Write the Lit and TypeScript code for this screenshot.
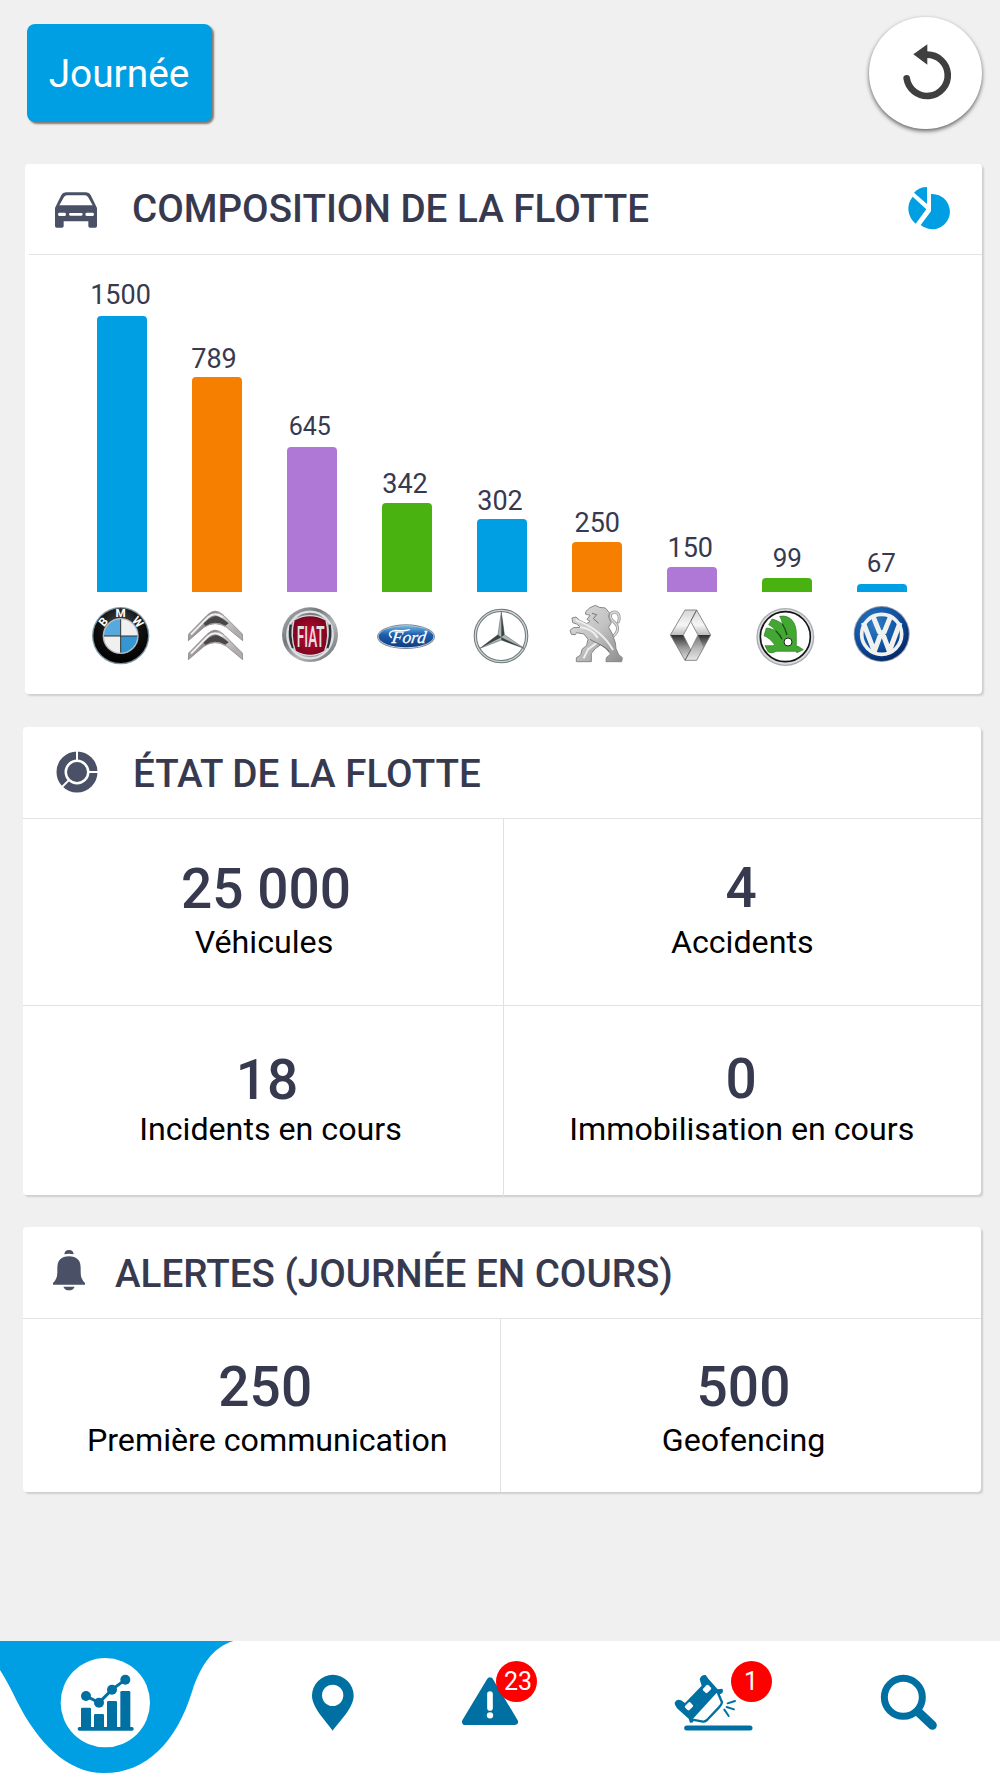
import { html, css, svg, LitElement, TemplateResult } from 'lit';

import { customElement, property } from 'lit/decorators.js';
import { styleMap } from 'lit/directives/style-map.js';


interface Brand {
  name: string;
  count: number;
  height: number;
  color: string;
  gap: number;
  shift: number;
  size?: number;
  logo: TemplateResult;
}

interface Stat {
  value: string;
  label: string;
  className: string;
}

const BLUE = '#009fe3';
const ORANGE = '#f77f00';
const PURPLE = '#af78d6';
const GREEN = '#49b211';

const bmw = html`<svg viewBox="30 39 192 192">
  <defs>
    <radialGradient id="bmw-ring" cx="0.5" cy="0.3" r="0.7">
      <stop offset="0" stop-color="#4a4d50"></stop>
      <stop offset="0.55" stop-color="#111"></stop>
      <stop offset="1" stop-color="#000"></stop>
    </radialGradient>
  </defs>
  <circle cx="122" cy="137" r="86" fill="#7d96a3"></circle>
  <circle cx="122" cy="137" r="82" fill="url(#bmw-ring)"></circle>
  <circle cx="122" cy="138" r="54" fill="#b4b8bb"></circle>
  <circle cx="122" cy="138" r="50" fill="#f0f0f0"></circle>
  <path d="M122 138V88A50 50 0 0 0 72 138Z" fill="#56a9dc"></path>
  <path d="M122 138V188A50 50 0 0 0 172 138Z" fill="#3496d2"></path>
  <path d="M122 88V188M72 138H172" stroke="#333" stroke-width="3"></path>
  <g fill="#fff" font-family="Roboto, sans-serif" font-weight="700" font-size="35" text-anchor="middle">
    <text transform="translate(79 103) rotate(-50)">B</text>
    <text x="122" y="82">M</text>
    <text transform="translate(164 104) rotate(50)">W</text>
  </g>
</svg>`;

const chevron = svg`
  <path d="M325 152L326 132L380 77Q405 50 432 77L487 132L488 152L440 112Q405 90 372 112Z" fill="url(#citroen-metal)" stroke="#8d8888" stroke-width="2.5"></path>
  <path d="M370 100Q392 80 408 78Q424 80 446 100L436 107Q405 90 376 107Z" fill="#4a4748"></path>
  <path d="M333 134L384 82Q405 64 428 82" fill="none" stroke="#f3f0f0" stroke-width="6"></path>`;

const citroen = html`<svg viewBox="315 39 192 192">
  <defs>
    <linearGradient id="citroen-metal" x1="0" y1="0" x2="1" y2="0.3">
      <stop offset="0" stop-color="#c6c1c2"></stop>
      <stop offset="0.45" stop-color="#8c8889"></stop>
      <stop offset="0.65" stop-color="#d2cece"></stop>
      <stop offset="1" stop-color="#b0abac"></stop>
    </linearGradient>
  </defs>
  <g>${chevron}</g>
  <g transform="translate(0 57)">${chevron}</g>
</svg>`;

const fiat = html`<svg viewBox="600 39 192 192">
  <defs>
    <linearGradient id="fiat-ring" x1="0" y1="0" x2="1" y2="1">
      <stop offset="0" stop-color="#b4b8bb"></stop>
      <stop offset="0.35" stop-color="#73787c"></stop>
      <stop offset="0.6" stop-color="#b6b9bb"></stop>
      <stop offset="1" stop-color="#5f6569"></stop>
    </linearGradient>
    <radialGradient id="fiat-red">
      <stop offset="0" stop-color="#c4082f"></stop>
      <stop offset="1" stop-color="#7d0520"></stop>
    </radialGradient>
  </defs>
  <ellipse cx="690" cy="134" rx="84" ry="82" fill="url(#fiat-ring)"></ellipse>
  <ellipse cx="690" cy="135" rx="68" ry="70" fill="none" stroke="#dfe2e4" stroke-width="7"></ellipse>
  <path d="M632 104Q626 140 639 174M749 104Q755 140 742 174" fill="none" stroke="#2f3235" stroke-width="7"></path>
  <path d="M642 90Q690 64 738 90Q750 138 734 184Q690 208 646 184Q630 138 642 90Z" fill="url(#fiat-red)" stroke="#d5d8da" stroke-width="4"></path>
  <text transform="translate(650 170) scale(0.475 1)" fill="#dfe1e4" font-family="Roboto, sans-serif" font-weight="500" font-size="86">FIAT</text>
</svg>`;

const ford = html`<svg viewBox="45 39 192 192">
  <defs>
    <linearGradient id="ford-blue" x1="0" y1="0" x2="0" y2="1">
      <stop offset="0" stop-color="#6fb3e2"></stop>
      <stop offset="0.4" stop-color="#1d5fae"></stop>
      <stop offset="1" stop-color="#0f3c80"></stop>
    </linearGradient>
  </defs>
  <ellipse cx="138" cy="140" rx="87" ry="37" fill="#7e8a96"></ellipse>
  <ellipse cx="138" cy="140" rx="84" ry="34" fill="#c3d2e0"></ellipse>
  <ellipse cx="138" cy="140" rx="82" ry="32" fill="url(#ford-blue)"></ellipse>
  <path d="M94 142Q84 134 92 126Q100 120 116 122Q134 124 148 119" fill="none" stroke="#fff" stroke-width="4.5" stroke-linecap="round"></path>
  <text transform="translate(94 159) skewX(-8)" fill="#fff" font-family="'Liberation Serif', serif" font-weight="400" font-style="italic" font-size="52" stroke="#fff" stroke-width="0.8">Ford</text>
</svg>`;

const mercedes = html`<svg viewBox="330 39 192 192">
  <circle cx="423" cy="138" r="77" fill="none" stroke="#6e7879" stroke-width="10"></circle>
  <circle cx="423" cy="138" r="77" fill="none" stroke="#cfd5d6" stroke-width="4"></circle>
  <path d="M424 66L433 134L492 175L424 150L360 175L414 134Z" fill="#aeb6b7" stroke="#6a7374" stroke-width="2"></path>
  <path d="M424 66L433 134L424 142ZM492 175L424 150V142ZM360 175L414 134L424 142Z" fill="#3a4344"></path>
</svg>`;

const peugeot = html`<svg viewBox="615 39 192 192">
  <defs>
    <linearGradient id="peugeot-metal" x1="0" y1="0" x2="1" y2="1">
      <stop offset="0" stop-color="#dedede"></stop>
      <stop offset="0.5" stop-color="#c2c2c2"></stop>
      <stop offset="1" stop-color="#8c8c8c"></stop>
    </linearGradient>
  </defs>
  <path d="M754 142C778 128 777 108 762 96C745 82 750 65 765 66C777 68 781 82 775 96" fill="none" stroke="#999" stroke-width="9" stroke-linecap="round"></path>
  <path d="M754 142C778 128 777 108 762 96C745 82 750 65 765 66C777 68 781 82 775 96" fill="none" stroke="#dcdcdc" stroke-width="4" stroke-linecap="round"></path>
  <path d="M678 64L690 53L706 46L718 52L736 54L748 68L746 82L754 98L746 112L756 130L766 158L768 176L776 194L787 203L785 215H738L739 203L752 192L738 176L722 164L706 176L694 190V215H649V203L662 195L666 178L680 166L684 148L672 132L650 128L646 134L634 133L630 121L640 113L662 112L650 102L638 98L636 84L648 81L660 92L680 101L690 94L681 88L690 76L676 72Z" fill="url(#peugeot-metal)" stroke="#888" stroke-width="3" stroke-linejoin="round"></path>
  <path d="M650 91C690 106 730 130 758 178M662 112C684 114 700 124 712 142M672 203L684 178L708 160" fill="none" stroke="#eee" stroke-width="6" stroke-linecap="round"></path>
  <path d="M690 148C710 160 730 166 748 184M696 70L710 74L700 86L716 100" fill="none" stroke="#777" stroke-width="3"></path>
</svg>`;

const renault = html`<svg viewBox="60 39 192 192">
  <defs>
    <linearGradient id="renault-dark" x1="0" y1="0" x2="0" y2="1">
      <stop offset="0" stop-color="#2d2d2d"></stop>
      <stop offset="0.5" stop-color="#999"></stop>
      <stop offset="1" stop-color="#e2e2e2"></stop>
    </linearGradient>
    <linearGradient id="renault-light" x1="0" y1="0" x2="0" y2="1">
      <stop offset="0" stop-color="#d5d5d5"></stop>
      <stop offset="0.6" stop-color="#f6f6f6"></stop>
      <stop offset="1" stop-color="#bbb"></stop>
    </linearGradient>
  </defs>
  <path d="M135 60H170L212 135H174L152 94L130 135H91Z" fill="url(#renault-light)"></path>
  <path d="M91 135H130L152 180L174 135H212L170 211H135Z" fill="url(#renault-dark)"></path>
  <path d="M152 180L135 211H170L190 172L174 135Z" fill="#eee" opacity="0.35"></path>
  <path d="M170 60L152 94M152 180L135 211" stroke="#555" stroke-width="3"></path>
  <path d="M152 94L174 135L152 180L130 135Z" fill="#fff" stroke="#777" stroke-width="2.5"></path>
  <path d="M135 60H170L212 135L170 211H135L91 135Z" fill="none" stroke="#777" stroke-width="2.5"></path>
</svg>`;

const skoda = html`<svg viewBox="345 39 192 192">
  <circle cx="436" cy="141" r="87" fill="#a9adb2"></circle>
  <circle cx="436" cy="141" r="83" fill="#d9dce0"></circle>
  <circle cx="436" cy="140" r="75" fill="#fff" stroke="#151515" stroke-width="5"></circle>
  <path d="M419 79C452 73 469 100 469 130V165L470 174L473 168L490 179L471 188L466 184H408Q396 193 384 185L375 167H400L403 163C396 152 384 142 372 137L379 114C390 115 400 118 408 123C402 115 395 109 386 104L396 87C408 90 418 95 427 102C426 94 423 86 419 79Z" fill="#43a832" stroke="#2f7a26" stroke-width="2"></path>
  <path d="M408 123Q420 134 426 148M427 102Q437 117 441 135" fill="none" stroke="#1d4a19" stroke-width="4"></path>
  <circle cx="444" cy="156" r="12" fill="#fff" stroke="#222" stroke-width="3"></circle>
</svg>`;

const volkswagen = html`<svg viewBox="630 39 192 192">
  <defs>
    <radialGradient id="vw-blue" cx="0.38" cy="0.32" r="0.75">
      <stop offset="0" stop-color="#2f7dc6"></stop>
      <stop offset="0.6" stop-color="#0e4f9f"></stop>
      <stop offset="1" stop-color="#051f5c"></stop>
    </radialGradient>
  </defs>
  <circle cx="725" cy="132" r="84" fill="#8895a8"></circle>
  <circle cx="725" cy="132" r="81" fill="url(#vw-blue)"></circle>
  <circle cx="725" cy="133" r="60" fill="none" stroke="#f1f1ef" stroke-width="11"></circle>
  <g fill="none" stroke="#f1f1ef" stroke-width="15" stroke-linejoin="bevel">
    <path d="M698 76L719 128H732L753 76"></path>
    <path d="M670 98L703 184L720 138H731L748 184L780 98"></path>
  </g>
</svg>`;

const BRANDS: Brand[] = [
  { name: 'BMW', count: 1500, height: 276, color: BLUE, gap: 4.6, shift: -1.2, logo: bmw },
  { name: 'Citroën', count: 789, height: 215, color: ORANGE, gap: 1.5, shift: -2.7, logo: citroen },
  { name: 'Fiat', count: 645, height: 145, color: PURPLE, gap: 3.7, shift: -1.9, size: 25, logo: fiat },
  { name: 'Ford', count: 342, height: 88.5, color: GREEN, gap: 3, shift: -1.7, logo: ford },
  { name: 'Mercedes', count: 302, height: 72.5, color: BLUE, gap: 2.2, shift: -1.7, logo: mercedes },
  { name: 'Peugeot', count: 250, height: 50, color: ORANGE, gap: 2.2, shift: 0.6, logo: peugeot },
  { name: 'Renault', count: 150, height: 25, color: PURPLE, gap: 2.2, shift: -1.4, logo: renault },
  { name: 'Škoda', count: 99, height: 14, color: GREEN, gap: 3.6, shift: 0.6, size: 26, logo: skoda },
  { name: 'Volkswagen', count: 67, height: 8, color: BLUE, gap: 5, shift: -0.3, size: 26, logo: volkswagen },
];

const FLEET: Stat[] = [
  { value: '25 000', label: 'Véhicules', className: 'vehicles' },
  { value: '4', label: 'Accidents', className: 'accidents' },
  { value: '18', label: 'Incidents en cours', className: 'incidents' },
  { value: '0', label: 'Immobilisation en cours', className: 'immobilised' },
];

const ALERTS: Stat[] = [
  { value: '250', label: 'Première communication', className: 'first' },
  { value: '500', label: 'Geofencing', className: 'geofencing' },
];

@customElement('fleet-chart')
export class FleetChart extends LitElement {
  static styles = css`
  :host {
    display: flex;
    height: 412px;
    padding-left: 49.7px;
  }

  .brand {
    width: 95px;
    display: flex;
    flex-direction: column;
    align-items: center;
    justify-content: flex-end;
  }

  .count {
    font-size: 27px;
    line-height: 32px;
    color: #373a4f;
  }

  .bar {
    width: 50px;
    border-radius: 4px 4px 0 0;
  }

  .logo {
    width: 64px;
    height: 64px;
    margin-top: 11px;
  }

  .logo svg {
    display: block;
    width: 64px;
    height: 64px;
  }
  `;

  @property({ attribute: false })
  brands: Brand[] = [];

  render() {
    return this.brands.map((b) => html`
      <div class="brand">
        <div class="count" style=${styleMap({
          fontSize: b.size ? `${b.size}px` : undefined,
          marginBottom: `${b.gap}px`,
          transform: `translateX(${b.shift}px)`,
        })}>${b.count}</div>
        <div class="bar" style=${styleMap({ height: `${b.height}px`, background: b.color })}></div>
        <div class="logo" role="img" aria-label=${b.name}>${b.logo}</div>
      </div>`);
  }
}

@customElement('stat-grid')
export class StatGrid extends LitElement {
  static styles = css`
  :host {
    display: grid;
    text-align: center;
  }

  .stat {
    box-sizing: border-box;
    border-right: 1.5px solid #dfe0e1;
    padding-top: 38px;
  }

  .stat:nth-child(2n) {
    border-right: none;
  }

  .stat:nth-child(n + 3) {
    border-top: 1.5px solid #e0e1e2;
    padding-top: 42px;
  }

  .value {
    font-size: 55px;
    font-weight: 500;
    line-height: 64px;
    color: #373a4f;
  }

  .label {
    font-size: 32.2px;
    line-height: 38px;
    margin-top: 2px;
    color: #000;
  }

  .stat:nth-child(n + 3) .label {
    margin-top: -2px;
  }

  .vehicles .value {
    padding-left: 7px;
  }

  .vehicles .label {
    padding-left: 3px;
  }

  .incidents .value {
    padding-left: 9px;
  }

  .incidents .label {
    padding-left: 16px;
  }

  .first, .geofencing {
    padding-top: 36px;
  }

  .first .value {
    padding-left: 8px;
  }

  .first .label {
    padding-left: 12px;
  }

  .geofencing .value {
    padding-left: 5px;
  }

  .geofencing .label {
    padding-left: 5px;
  }

  .accidents .value, .immobilised .value {
    transform: translate(-1px, -1px);
  }

  .immobilised .label {
    padding-right: 1px;
  }
  `;

  @property({ attribute: false })
  stats: Stat[] = [];

  render() {
    return this.stats.map((s) => html`
      <div class="stat ${s.className}">
        <div class="value">${s.value}</div>
        <div class="label">${s.label}</div>
      </div>`);
  }
}

@customElement('bottom-nav')
export class BottomNav extends LitElement {
  static styles = css`
  :host {
    display: grid;
    grid-template-columns: 240px 186px 128px 320px 70px;
    height: 137px;
    background: #fff;
  }

  svg {
    display: block;
  }

  .active svg {
    width: 240px;
    height: 137px;
  }

  .item {
    display: flex;
    justify-content: center;
    padding-top: 32px;
  }

  .icon {
    position: relative;
    height: 59px;
    color: #0070a3;
  }

  .icon svg {
    height: 59px;
  }

  .badge {
    position: absolute;
    top: -12px;
    width: 41px;
    height: 41px;
    border-radius: 50%;
    background: #f00;
    color: #fff;
    font-size: 25px;
    line-height: 41px;
    text-align: center;
  }

  .warning .badge {
    left: 36px;
    text-indent: 3px;
  }

  .crash .badge {
    left: 57.5px;
  }
  `;

  render() {
    return html`
      <div class="active">
        <svg viewBox="0 33 720 411">
          <path d="M0 33H700C638 52 601 108 577 182C530 335 440 429 312 429C200 429 112 335 50 212Q24 158 0 120Z" fill="#009fe3"></path>
          <circle cx="316" cy="218" r="134" fill="#fff"></circle>
          <g fill="#0070a3">
            <path d="M258 198L297 218L336 179L376 149" fill="none" stroke="#0070a3" stroke-width="9"></path>
            <circle cx="258" cy="198" r="15"></circle>
            <circle cx="297" cy="218" r="15"></circle>
            <circle cx="336" cy="179" r="15"></circle>
            <circle cx="376" cy="149" r="15"></circle>
            <rect x="243" y="233" width="30" height="64" rx="4"></rect>
            <rect x="282" y="252" width="30" height="45" rx="4"></rect>
            <rect x="321" y="213" width="30" height="84" rx="4"></rect>
            <rect x="361" y="183" width="30" height="114" rx="4"></rect>
            <rect x="233" y="291" width="168" height="11" rx="5"></rect>
          </g>
        </svg>
      </div>
      <div class="item">
        <div class="icon">
          <svg width="46" viewBox="930 129 138 177">
            <path d="M998 302C985 280 936 235 936 197A62 62 0 0 1 1061 197C1061 235 1012 280 998 302ZM998 164A32 32 0 1 0 998 228A32 32 0 1 0 998 164Z" fill="currentColor" fill-rule="evenodd"></path>
          </svg>
        </div>
      </div>
      <div class="item">
        <div class="icon warning">
          <svg width="60" viewBox="60 99 180 177">
            <path d="M150 122L224 245H76Z" fill="currentColor" stroke="currentColor" stroke-width="20" stroke-linejoin="round"></path>
            <path d="M150 162V204" stroke="#fff" stroke-width="17" stroke-linecap="round"></path>
            <circle cx="150" cy="226" r="9.5" fill="#fff"></circle>
          </svg>
          <span class="badge">23</span>
        </div>
      </div>
      <div class="item">
        <div class="icon crash">
          <svg width="82" viewBox="700 99 246 177">
            <path d="M706 194L705 188Q710 176 724 181L736 189L786 137L780 118Q784 104 798 105L806 116L834 148L848 146Q854 157 842 162L763 237Q762 251 751 248L747 236L712 205Z" fill="currentColor"></path>
            <path d="M832 152L847 187Q846 194 838 202L802 240Q794 247 786 244L754 238Z" fill="#fff" stroke="currentColor" stroke-width="7" stroke-linejoin="round"></path>
            <rect x="-11" y="-9" width="22" height="18" rx="4" transform="translate(802 147) rotate(-45)" fill="#fff"></rect>
            <rect x="-11" y="-9" width="22" height="18" rx="4" transform="translate(748 199) rotate(-45)" fill="#fff"></rect>
            <path d="M864 190L886 183M861 201L883 208M854 209L867 228" stroke="currentColor" stroke-width="6" stroke-linecap="round"></path>
            <path d="M741 264H931" stroke="currentColor" stroke-width="15" stroke-linecap="round"></path>
          </svg>
          <span class="badge">1</span>
        </div>
      </div>
      <div class="item">
        <div class="icon">
          <svg width="60" viewBox="87 99 180 177">
            <circle cx="160" cy="172" r="57" fill="none" stroke="currentColor" stroke-width="21"></circle>
            <path d="M205 216L247 256" stroke="currentColor" stroke-width="27" stroke-linecap="round"></path>
            <path d="M200 210L216 226" stroke="currentColor" stroke-width="22"></path>
          </svg>
        </div>
      </div>`;
  }
}

@customElement('app-root')
export class AppRoot extends LitElement {
  static styles = css`
  :host {
    display: flex;
    flex-direction: column;
    box-sizing: border-box;
    width: 1000px;
    height: 1778px;
    overflow: hidden;
    background: #f0f0f0;
    font-family: Roboto, sans-serif;
  }

  .top {
    display: flex;
    justify-content: space-between;
    height: 146.5px;
    padding: 16.5px 18px 0 27px;
  }

  button {
    border: none;
    padding: 0;
    font: inherit;
  }

  .period {
    width: 185px;
    height: 98px;
    margin-top: 7px;
    border-radius: 8px;
    padding: 2px 1px 0 0;
    background: #009fe3;
    color: #fff;
    font-size: 38.8px;
    box-shadow: 2px 2px 2px rgba(60, 40, 30, 0.6);
  }

  .refresh {
    width: 113px;
    height: 112.5px;
    border-radius: 50%;
    background: #fff;
    box-shadow: 0 2px 4px rgba(0, 0, 0, 0.6);
  }

  svg {
    display: block;
  }

  .refresh svg {
    margin-top: -1px;
  }

  .card {
    box-sizing: border-box;
    width: 958.5px;
    margin-left: 22.5px;
    border-radius: 4px;
    background: #fff;
    box-shadow: 2px 2px 2px rgba(0, 0, 0, 0.14);
  }

  .composition {
    width: 957.5px;
    height: 530.5px;
    margin-left: 24.5px;
    margin-top: 0.5px;
  }

  .state {
    height: 467.5px;
    margin-top: 33.3px;
  }

  .alerts {
    height: 264.5px;
    margin-top: 32.4px;
  }

  .header {
    display: flex;
    align-items: center;
    box-sizing: border-box;
    height: 91px;
    border-bottom: 1.5px solid #e2e3e4;
    padding-left: 33.5px;
  }

  .state .header, .alerts .header {
    height: 92px;
  }

  .composition .header {
    margin-left: 4.5px;
    padding: 0 31px 0 25px;
  }

  h2 {
    flex: 1;
    margin: 0;
    padding-top: 2px;
    font-size: 38.6px;
    font-weight: 500;
    line-height: 44px;
    color: #373a4f;
  }

  .composition h2 {
    padding-left: 33px;
    padding-top: 1px;
  }

  .car {
    margin-top: 2px;
  }

  .pie {
    margin-bottom: 2px;
  }

  .bell {
    margin-bottom: 5px;
  }

  .state h2 {
    padding-left: 34px;
  }

  .alerts .header {
    padding-left: 29.5px;
  }

  .alerts h2 {
    padding-left: 29px;
  }

  .state stat-grid {
    grid-template-columns: 481px 1fr;
    grid-template-rows: 185.5px 192.5px;
  }

  .alerts stat-grid {
    grid-template-columns: 478.5px 1fr;
    grid-template-rows: 172.5px;
  }

  bottom-nav {
    margin-top: auto;
  }
  `;

  render() {
    return html`
      <div class="top">
        <button class="period">Journée</button>
        <button class="refresh" aria-label="Actualiser">
          <svg width="113" height="113" viewBox="1107 49 339 339">
            <path d="M1220 236A62 62 0 1 0 1280 165" fill="none" stroke="#3f3f3f" stroke-width="20" stroke-linecap="round"></path>
            <path d="M1240 164L1282 134V195Z" fill="#3f3f3f"></path>
          </svg>
        </button>
      </div>

      <section class="card composition">
        <div class="header">
          <svg class="car" width="45" height="39" viewBox="162 572 135 117">
            <path d="M165 626L184 587Q188 579 198 579H258Q268 579 272 587L291 626V680Q291 685 286 685H270Q265 685 265 680V666H191V680Q191 685 186 685H170Q165 685 165 680ZM201 588Q195 588 192 593L178 618H278L264 593Q261 588 255 588ZM178 640Q174 640 174 645Q174 650 178 650H194Q198 650 198 645Q198 640 194 640ZM211 641Q207 641 207 645Q207 649 211 649H244Q248 649 248 645Q248 641 244 641ZM260 640Q256 640 256 645Q256 650 260 650H278Q282 650 282 645Q282 640 278 640Z" fill="#4a5166" fill-rule="evenodd"></path>
          </svg>
          <h2>COMPOSITION DE LA FLOTTE</h2>
          <svg class="pie" width="46" height="46" viewBox="1218 555 138 138">
            <g fill="#009fe3">
              <path d="M1296 582A53 53 0 1 1 1265 675L1296 634Z"></path>
              <path d="M1241 590L1282 628L1250 671A57 57 0 0 1 1241 590Z"></path>
              <path d="M1284 561V612L1245 578Q1260 561 1284 561Z"></path>
            </g>
          </svg>
        </div>
        <fleet-chart .brands=${BRANDS}></fleet-chart>
      </section>

      <section class="card state">
        <div class="header">
          <svg width="43" height="43" viewBox="169 124 129 129">
            <circle cx="232" cy="187" r="49.5" fill="none" stroke="#4a5166" stroke-width="24"></circle>
            <circle cx="232" cy="187" r="30" fill="#4a5166"></circle>
            <path d="M232 151V120M268 187H298M207 212L184 235" stroke="#fff" stroke-width="6"></path>
          </svg>
          <h2>ÉTAT DE LA FLOTTE</h2>
        </div>
        <stat-grid .stats=${FLEET}></stat-grid>
      </section>

      <section class="card alerts">
        <div class="header">
          <svg class="bell" width="34" height="43" viewBox="156 205 102 129">
            <g fill="#4a5166">
              <path d="M193 221Q194 208 207 208Q220 208 221 221Q207 217 193 221Z"></path>
              <path d="M159 312V307Q172 296 172 275V262Q172 227 207 227Q242 227 242 262V275Q242 296 255 307V312Z"></path>
              <path d="M190 318H224Q220 329 207 329Q194 329 190 318Z"></path>
            </g>
          </svg>
          <h2>ALERTES (JOURNÉE EN COURS)</h2>
        </div>
        <stat-grid .stats=${ALERTS}></stat-grid>
      </section>

      <bottom-nav></bottom-nav>`;
  }
}
